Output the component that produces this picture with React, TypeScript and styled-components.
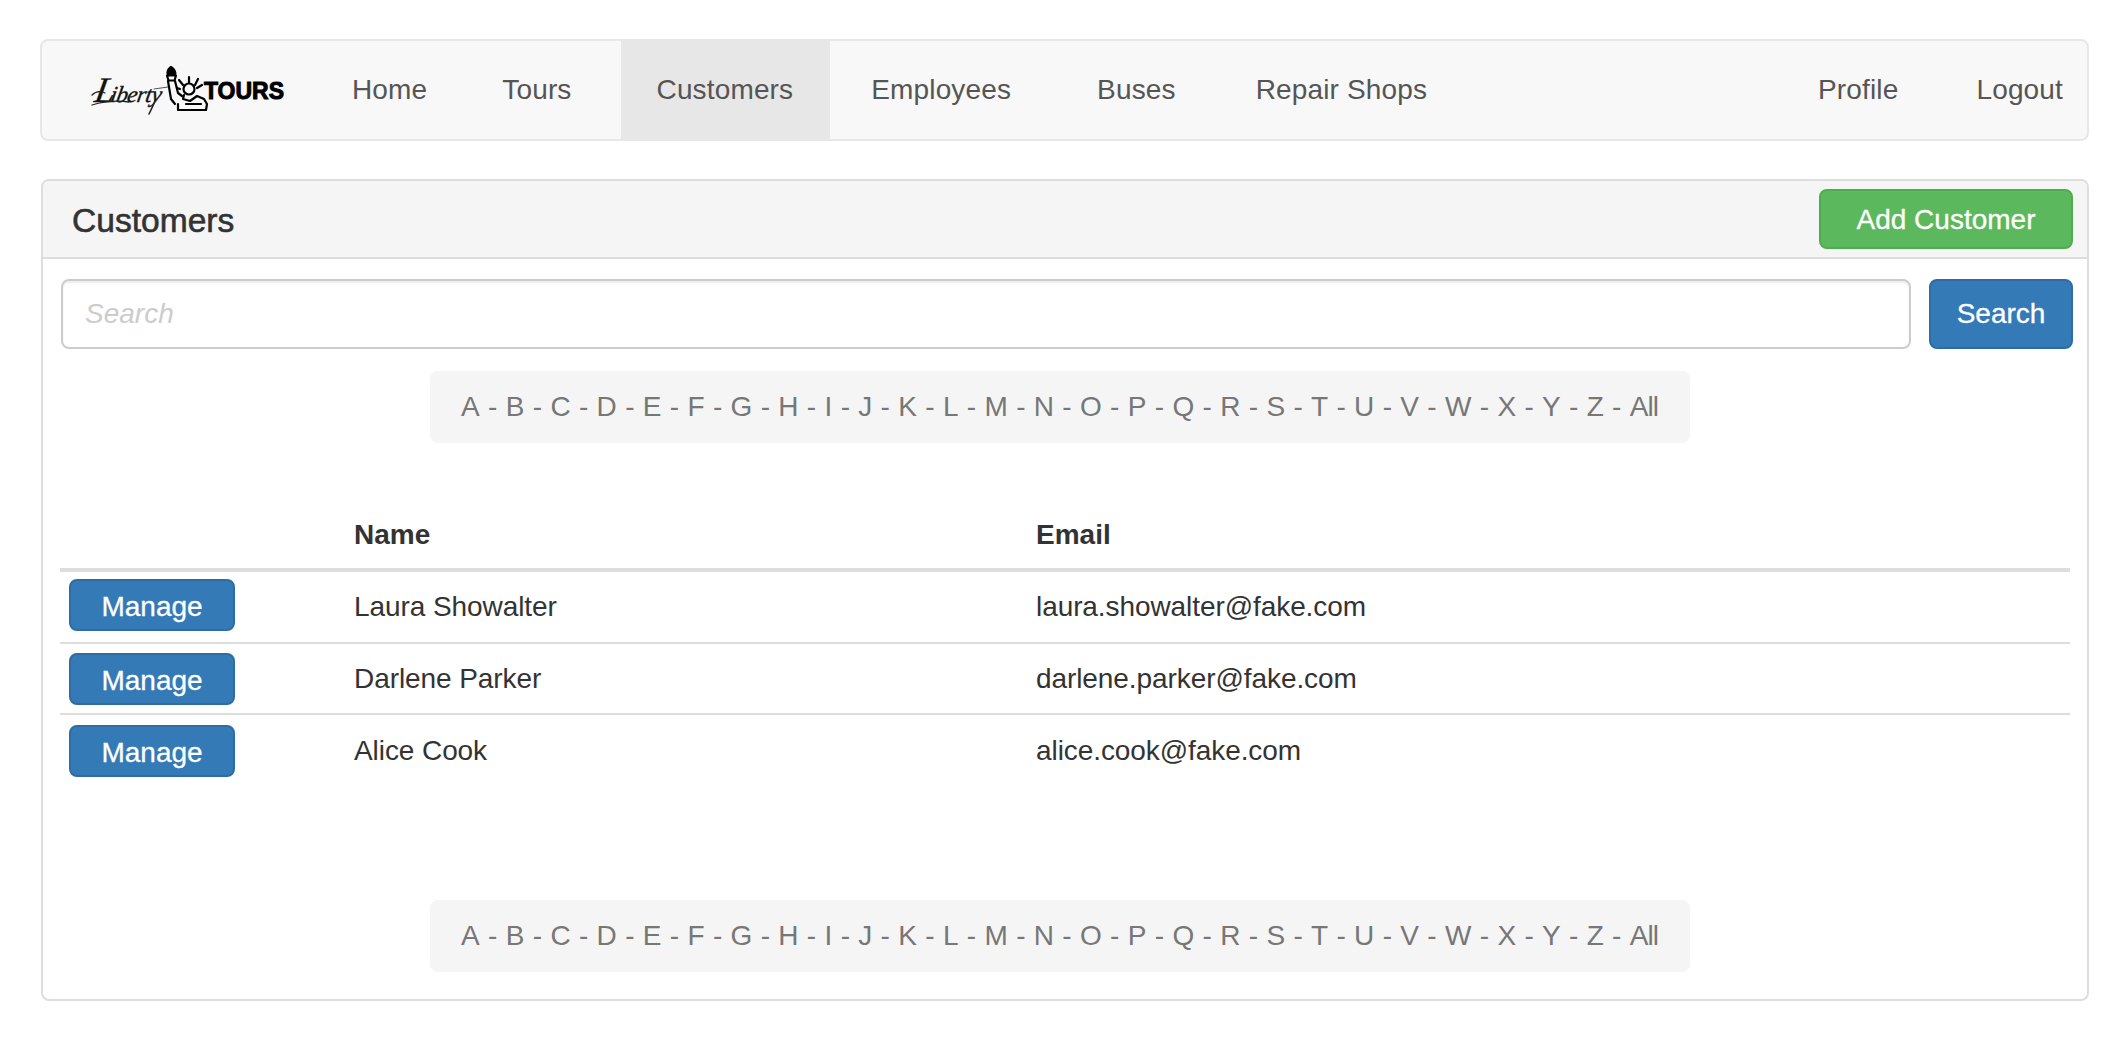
import React from "react";
import styled, { createGlobalStyle } from "styled-components";

const Global = createGlobalStyle`
  html, body { margin: 0; padding: 0; background: #fff; }
  body { font-family: "Liberation Sans", Arial, sans-serif; font-size: 28px; color: #333; }
  * { box-sizing: border-box; }
`;

const Page = styled.div`
  width: 2128px;
  height: 1040px;
  padding: 39px 39px 0 40px;
  overflow: hidden;
`;

const Navbar = styled.nav`
  display: flex;
  align-items: stretch;
  height: 102px;
  background: #f8f8f8;
  border: 2px solid #e7e7e7;
  border-radius: 8px;
  margin-bottom: 38px;
`;

const Brand = styled.a`
  display: flex;
  align-items: center;
  width: 281px;
  padding-left: 46px;
`;

const NavLink = styled.a<{ $left: number; $right: number; $active?: boolean }>`
  display: flex;
  align-items: center;
  padding: 0 ${(p) => p.$right}px 0 ${(p) => p.$left}px;
  color: #555;
  font-size: 28px;
  letter-spacing: 0.15px;
  background: ${(p) => (p.$active ? "#e7e7e7" : "transparent")};
`;

const Spacer = styled.div`
  flex: 1;
`;

const Panel = styled.section`
  margin-left: 1px;
  height: 822px;
  border: 2px solid #ddd;
  border-radius: 8px;
  overflow: hidden;
`;

const PanelHeader = styled.header`
  display: flex;
  align-items: center;
  justify-content: space-between;
  height: 78px;
  padding: 0 14px 0 29px;
  background: #f5f5f5;
  border-bottom: 2px solid #ddd;
`;

const PanelTitle = styled.h3`
  margin: 0;
  padding-top: 3px;
  font-size: 33.6px;
  font-weight: 400;
  color: #333;
  -webkit-text-stroke: 0.6px #333;
`;

const Button = styled.button<{ $variant: "success" | "primary" }>`
  font-family: inherit;
  font-size: 28px;
  color: #fff;
  -webkit-text-stroke: 0.3px #fff;
  border-radius: 8px;
  border: 2px solid ${(p) => (p.$variant === "success" ? "#4cae4c" : "#2e6da4")};
  background: ${(p) => (p.$variant === "success" ? "#5cb85c" : "#337ab7")};
  padding: 0;
`;

const AddButton = styled(Button)`
  width: 254px;
  height: 60px;
  padding-top: 2px;
`;

const SearchRow = styled.form`
  display: flex;
  gap: 18px;
  padding: 20px 14px 0 18px;
`;

const SearchInput = styled.input`
  flex: 1;
  height: 70px;
  padding: 0 22px;
  font-family: inherit;
  font-size: 28px;
  color: #555;
  border: 2px solid #ccc;
  border-radius: 8px;
  box-shadow: inset 0 2px 2px rgba(0, 0, 0, 0.075);
  &::placeholder {
    color: #ccc;
    font-style: italic;
    opacity: 1;
  }
`;

const SearchButton = styled(Button)`
  width: 144px;
  height: 70px;
`;

const PagerWrap = styled.div<{ $top: number }>`
  display: flex;
  justify-content: center;
  padding-right: 11px;
  margin-top: ${(p) => p.$top}px;
`;

const Pager = styled.div`
  display: flex;
  align-items: center;
  justify-content: center;
  width: 1260px;
  height: 72px;
  background: #f5f5f5;
  border-radius: 8px;
  color: #777;
  font-size: 28px;
  letter-spacing: 0.27px;
  white-space: pre;
`;

const Letter = styled.a`
  color: #777;
`;

const AllLink = styled(Letter)`
  letter-spacing: -1px;
`;

const Table = styled.table`
  width: 2010px;
  margin: 67px 0 0 17px;
  border-collapse: collapse;
  table-layout: fixed;
`;

const Th = styled.th`
  height: 60px;
  padding: 0 16px 8px;
  text-align: left;
  font-size: 28px;
  font-weight: 700;
  color: #333;
  border-bottom: 4px solid #ddd;
`;

const Td = styled.td`
  height: 72px;
  padding: 0 16px;
  font-size: 28px;
  letter-spacing: -0.08px;
  color: #333;
  border-top: 2px solid #ddd;
  tr:first-child > & {
    height: 73px;
  }
  tr:nth-child(2) > & {
    height: 71px;
  }
`;

const ActionTd = styled(Td)`
  padding: 0 9px;
  tr:first-child > & {
    padding-bottom: 5px;
  }
`;

const ManageButton = styled(Button)`
  display: block;
  width: 166px;
  height: 52px;
  padding-top: 4px;
`;

const letters = "ABCDEFGHIJKLMNOPQRSTUVWXYZ".split("");

function Alphabet() {
  return (
    <Pager>
      {letters.map((l) => (
        <React.Fragment key={l}>
          <Letter>{l}</Letter>
          {" - "}
        </React.Fragment>
      ))}
      <AllLink>All</AllLink>
    </Pager>
  );
}

function Logo() {
  return (
    <svg width="200" height="54" viewBox="86 66 200 54" fill="none">
      <g transform="translate(18 0) skewX(-10)" fill="#111">
        <text
          x="92"
          y="105"
          fontFamily="'Liberation Serif', serif"
          fontStyle="italic"
          stroke="#111"
          strokeWidth="0.35"
        >
          <tspan fontSize="36">L</tspan>
          <tspan fontSize="23" dx="-4" letterSpacing="-0.5">iberty</tspan>
        </text>
      </g>
      <path d="M90 108c10-3 22-5 37-3" stroke="#222" strokeWidth="1.3" strokeLinecap="round" />
      <path d="M90 98c4-4 9-4 13-2" stroke="#222" strokeWidth="1.3" strokeLinecap="round" />
      <path d="M153 104c-2 5-4 9-6 13" stroke="#222" strokeWidth="1.6" strokeLinecap="round" />
      <path d="M152 92l14-2" stroke="#555" strokeWidth="1" strokeLinecap="round" />
      <g stroke="#000" strokeWidth="2.2" strokeLinejoin="round" strokeLinecap="round">
        <path d="M169 70c-3 2-4 5-3 8h7c1-3-1-6-4-8z" fill="#000" />
        <path d="M165 78.500h9l-1.500 5h-6z" />
        <path d="M166 84l3 18 4 5" />
        <path d="M173 84l3 12 4 3" />
        <circle cx="187" cy="92" r="5.500" />
        <path d="M181 88l-4-5M187 86v-6M193 88l3-6M195 91l5-3M178 92l-3-1" />
        <path d="M182 98l-1 4 7 2 7-5 7 3 3 5-1 6h-28v-6" />
        <path d="M184 107h15" />
      </g>
      <text
        x="202"
        y="102"
        fontFamily="'Liberation Sans', sans-serif"
        fontWeight="700"
        fontSize="24"
        fill="#000"
        stroke="#000"
        strokeWidth="1"
        textLength="80"
        lengthAdjust="spacingAndGlyphs"
      >
        TOURS
      </text>
    </svg>
  );
}

const customers = [
  { name: "Laura Showalter", email: "laura.showalter@fake.com" },
  { name: "Darlene Parker", email: "darlene.parker@fake.com" },
  { name: "Alice Cook", email: "alice.cook@fake.com" },
];

export default function App() {
  return (
    <Page>
      <Global />
      <Navbar>
        <Brand>
          <Logo />
        </Brand>
        <NavLink $left={29} $right={37}>Home</NavLink>
        <NavLink $left={38} $right={49}>Tours</NavLink>
        <NavLink $left={36} $right={37} $active>Customers</NavLink>
        <NavLink $left={41} $right={42}>Employees</NavLink>
        <NavLink $left={44} $right={39}>Buses</NavLink>
        <NavLink $left={41} $right={0}>Repair Shops</NavLink>
        <Spacer />
        <NavLink $left={0} $right={78}>Profile</NavLink>
        <NavLink $left={0} $right={24}>Logout</NavLink>
      </Navbar>
      <Panel>
        <PanelHeader>
          <PanelTitle>Customers</PanelTitle>
          <AddButton $variant="success">Add Customer</AddButton>
        </PanelHeader>
        <SearchRow>
          <SearchInput placeholder="Search" />
          <SearchButton $variant="primary">Search</SearchButton>
        </SearchRow>
        <PagerWrap $top={22}>
          <Alphabet />
        </PagerWrap>
        <Table>
          <colgroup>
            <col style={{ width: 278 }} />
            <col style={{ width: 682 }} />
            <col />
          </colgroup>
          <thead>
            <tr>
              <Th />
              <Th>Name</Th>
              <Th>Email</Th>
            </tr>
          </thead>
          <tbody>
            {customers.map((c) => (
              <tr key={c.email}>
                <ActionTd>
                  <ManageButton $variant="primary">Manage</ManageButton>
                </ActionTd>
                <Td>{c.name}</Td>
                <Td>{c.email}</Td>
              </tr>
            ))}
          </tbody>
        </Table>
        <PagerWrap $top={114}>
          <Alphabet />
        </PagerWrap>
      </Panel>
    </Page>
  );
}
